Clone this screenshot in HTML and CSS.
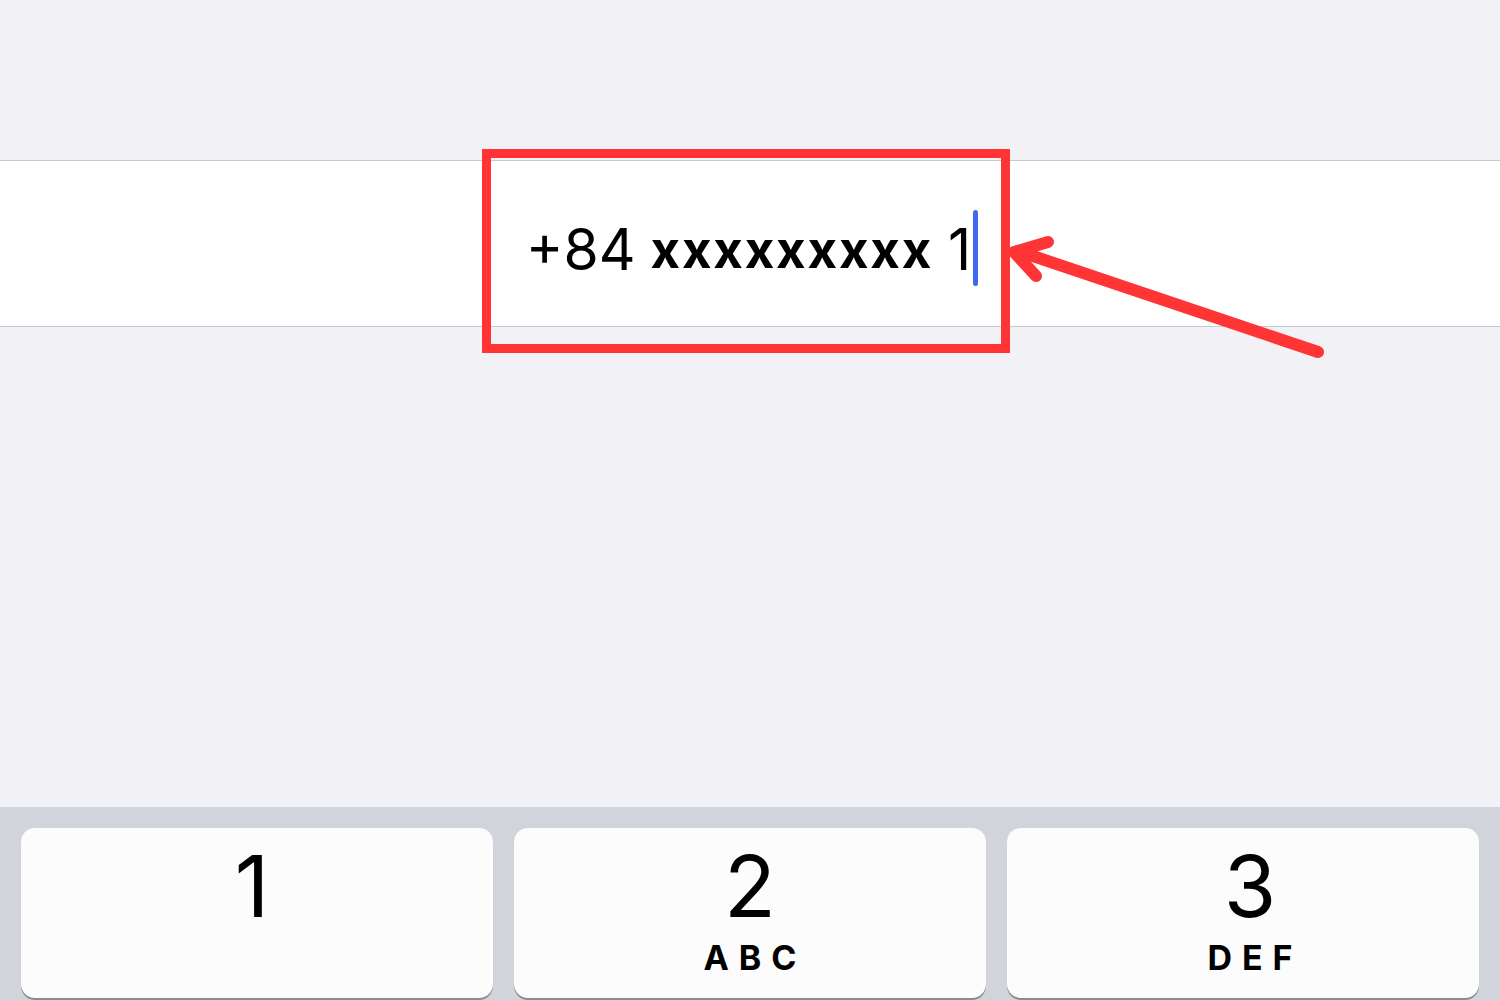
FILE: index.html
```html
<!DOCTYPE html>
<html lang="en">
<head>
    <meta charset="UTF-8">
    <title>Phone number</title>
    <link rel="stylesheet" href="styles.css">
</head>
<body>
    <div class="screen">
        <div class="top-space"></div>
        <div class="field-row">
            <div class="field-value">
                <span class="code">+84</span>
                <span class="masked">xxxxxxxxx</span>
                <span class="last">1</span><span class="cursor"></span>
            </div>
        </div>
        <div class="middle-space"></div>
        <div class="keypad">
            <div class="key key-first">
                <span class="digit">1</span>
                <span class="letters">&nbsp;</span>
            </div>
            <div class="key">
                <span class="digit">2</span>
                <span class="letters">ABC</span>
            </div>
            <div class="key key-last">
                <span class="digit">3</span>
                <span class="letters">DEF</span>
            </div>
        </div>

        <!-- annotation drawn on top of the screenshot -->
        <div class="highlight-box"></div>
        <svg class="arrow" width="1500" height="1000" viewBox="0 0 1500 1000">
            <g stroke="#ff3434" stroke-width="12" stroke-linecap="round" stroke-linejoin="round" fill="none">
                <line x1="1318" y1="352" x2="1018" y2="251"/>
                <polyline points="1048,242 1014,252 1036,276"/>
            </g>
        </svg>
    </div>
</body>
</html>
```

FILE: styles.css
```css
body {
    margin: 0;
    font-family: "Inter", "Roboto", sans-serif;
    color: #000;
    background-color: #f1f1f6;
}
.screen {
    position: relative;
    width: 1500px;
    height: 1000px;
    display: flex;
    flex-direction: column;
    overflow: hidden;
}
.top-space {
    height: 160px;
}
.field-row {
    height: 165px;
    background-color: #ffffff;
    border-top: 1px solid #c8c7cc;
    border-bottom: 1px solid #c8c7cc;
    display: flex;
    align-items: center;
    justify-content: center;
}
.field-value {
    display: flex;
    align-items: center;
    font-size: 57px;
    line-height: 1;
    margin-left: 4px;
    margin-top: 12px;
}
.code {
    font-weight: 400;
    margin-right: 15px;
}
.masked {
    font-weight: 700;
    font-size: 51px;
    letter-spacing: 1.8px;
    margin-right: 15px;
}
.last {
    font-weight: 400;
}
.cursor {
    width: 5px;
    height: 76px;
    margin-left: 2px;
    margin-top: -4px;
    border-radius: 3px;
    background-color: #4169f0;
}
.middle-space {
    flex: 1;
}
.keypad {
    height: 193px;
    background-color: #d1d4da;
    display: grid;
    grid-template-columns: repeat(3, 1fr);
    gap: 21px;
    padding: 21px 21px 0;
    box-sizing: border-box;
}
.key {
    height: 170px;
    background-color: #fcfcfc;
    border-radius: 14px;
    box-shadow: 0 2px 0 #8a8b8e;
    display: flex;
    flex-direction: column;
    align-items: center;
}
.key-first {
    padding-right: 10px;
}
.key-last {
    padding-left: 14px;
}
.digit {
    font-size: 85px;
    line-height: 1;
    margin-top: 16px;
}
.letters {
    font-size: 34px;
    font-weight: 700;
    letter-spacing: 10px;
    margin-right: -10px;
    line-height: 1;
    margin-top: 12px;
}
.highlight-box {
    position: absolute;
    left: 482px;
    top: 149px;
    width: 510px;
    height: 186px;
    border: 9px solid #ff3434;
}
.arrow {
    position: absolute;
    left: 0;
    top: 0;
}
```
